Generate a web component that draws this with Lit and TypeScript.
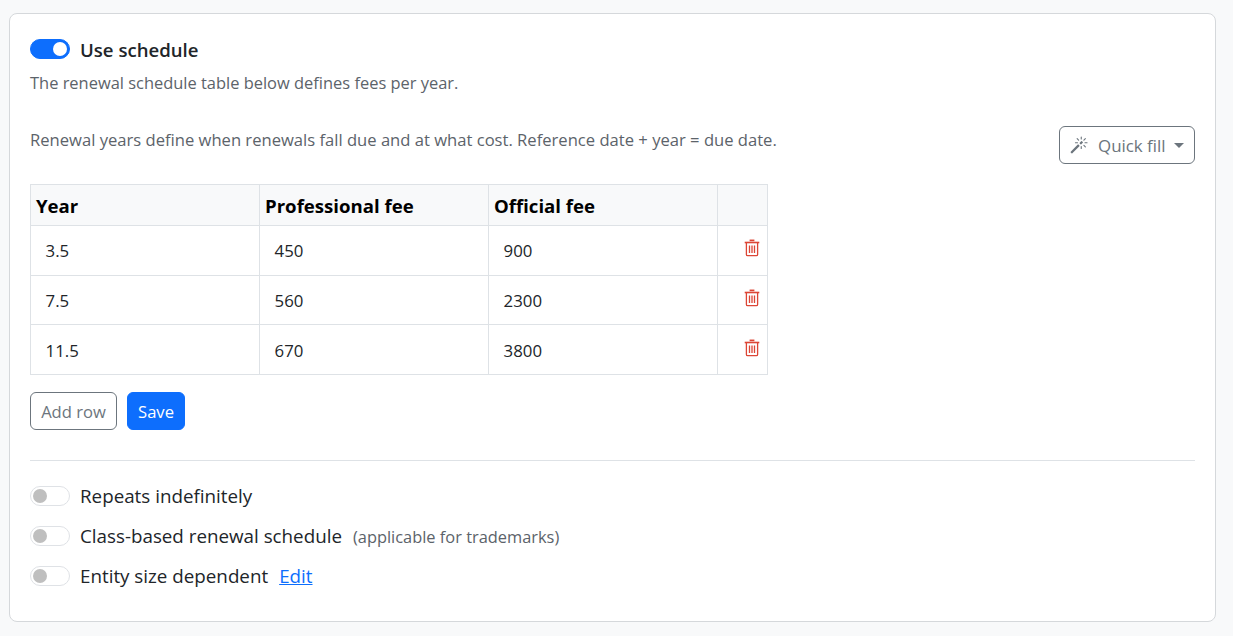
import { LitElement, html, css } from "lit";
import { customElement } from "lit/decorators.js";

@customElement("app-root")
export class AppRoot extends LitElement {
  static styles = css`
    :host { display: block; height: 636px; box-sizing: border-box; background: #f8f9fa; padding: 13px 17px 14px 9px;
      font-family: "Open Sans", "Noto Sans", sans-serif; font-size: 16.6px; color: #212529; overflow: hidden; }
    * { box-sizing: border-box; }
    .card { background: #fff; border: 1px solid #d5d8db; border-radius: 8px; height: 609px; padding: 23px 20px 0; }
    .sw-row { display: flex; align-items: center; gap: 10px; height: 24px; }
    .sw { width: 40px; height: 20px; border-radius: 10px; border: 1px solid #dfe2e6; background: #fff; display: flex; align-items: center; padding: 0 2px; flex: none; }
    .sw i { width: 14px; height: 14px; border-radius: 50%; background: #bfbfbf; display: block; }
    .sw.on { background: #0d6efd; border-color: #0d6efd; justify-content: flex-end; }
    .sw.on i { background: #fff; }
    .label { font-size: 18.8px; }
    .strong { font-weight: 600; font-size: 18.6px; }
    .muted { color: #5c636a; }
    .desc { margin: 10px 0 0; line-height: 24px; font-size: 16.45px; }
    .head { display: flex; justify-content: space-between; align-items: flex-start; margin-top: 31px; }
    .head p { margin: 2px 0 0; line-height: 24px; }
    .btn { height: 38px; border-radius: 6px; border: 1px solid #6c757d; color: #6c757d; background: #fff; display: inline-flex; align-items: center; padding: 0 10px; font: inherit; white-space: nowrap; }
    .qf { width: 136px; padding: 0 0 0 10px; font-size: 16.9px; }
    .qf svg { margin-right: 10px; flex: none; }
    .caret { width: 0; height: 0; flex: none; border-left: 5px solid transparent; border-right: 5px solid transparent; border-top: 5px solid #6c757d; margin-left: 8px; }
    table { border-collapse: collapse; margin-top: 20px; table-layout: fixed; width: 738px; }
    th, td { border: 1px solid #dee2e6; padding: 0; }
    th { background: #f8f9fa; height: 41px; text-align: left; padding: 0 5px; color: #000; font-size: 18.6px; font-weight: 700; }
    td { height: 49.7px; padding: 0.6px 15px 0 14.6px; color: #212529; font-size: 16.8px; }
    td.act { padding: 0 0 4px 26px; vertical-align: middle; }
    td.act svg { display: block; }
    .actions { display: flex; gap: 10px; margin-top: 17px; }
    .add { width: 87px; justify-content: center; padding: 0; }
    .save { background: #0d6efd; border-color: #0d6efd; color: #fff; width: 58px; justify-content: center; padding: 0; }
    hr { border: 0; border-top: 1px solid #dee2e6; margin: 30px 0 0; }
    .opts { display: flex; flex-direction: column; gap: 16px; margin-top: 23.4px; }
    .small { font-size: 16.4px; margin-left: 1px; }
    a { color: #0d6efd; text-decoration: underline; font-size: 18.8px; margin-left: 1px; }
  `;

  trash() {
    return html`<svg width="16" height="18" viewBox="0 0 16 18" fill="none" stroke="#dc4535" stroke-width="1.3">
      <path d="M0.7 3.5h14.6" stroke-width="1.6"/><path d="M5.6 1.4h4.8" stroke-width="1.7"/>
      <path d="M2.4 4v11.4a1.3 1.3 0 0 0 1.3 1.3h8.6a1.3 1.3 0 0 0 1.3-1.3V4"/>
      <path d="M5.5 6.5v7.5M8 6.5v7.5M10.5 6.5v7.5"/></svg>`;
  }

  render() {
    const rows = [["3.5", "450", "900"], ["7.5", "560", "2300"], ["11.5", "670", "3800"]];
    return html`<div class="card">
      <div class="sw-row"><span class="sw on"><i></i></span><span class="strong">Use schedule</span></div>
      <p class="desc muted">The renewal schedule table below defines fees per year.</p>
      <div class="head">
        <p class="muted">Renewal years define when renewals fall due and at what cost. Reference date + year = due date.</p>
        <button class="btn qf">
          <svg width="18" height="18" viewBox="0 0 16 16" fill="#6c757d"><path d="M9.5 2.672a.5.5 0 1 0 1 0V.843a.5.5 0 0 0-1 0v1.829Zm4.5.035A.5.5 0 0 0 13.293 2L12 3.293a.5.5 0 1 0 .707.707L14 2.707ZM7.293 4A.5.5 0 1 0 8 3.293L6.707 2A.5.5 0 0 0 6 2.707L7.293 4Zm-.621 2.5a.5.5 0 1 0 0-1H4.843a.5.5 0 1 0 0 1h1.829Zm8.485 0a.5.5 0 1 0 0-1h-1.829a.5.5 0 0 0 0 1h1.829ZM13.293 10A.5.5 0 1 0 14 9.293L12.707 8a.5.5 0 1 0-.707.707L13.293 10ZM9.5 11.157a.5.5 0 0 0 1 0V9.328a.5.5 0 0 0-1 0v1.829Zm1.854-5.097a.5.5 0 0 0 0-.706l-.708-.708a.5.5 0 0 0-.707 0L8.646 5.94a.5.5 0 0 0 0 .707l.708.708a.5.5 0 0 0 .707 0l1.293-1.293Zm-3 3a.5.5 0 0 0 0-.706l-.708-.708a.5.5 0 0 0-.707 0L.646 13.94a.5.5 0 0 0 0 .707l.708.708a.5.5 0 0 0 .707 0L8.354 9.06Z"/></svg>
          <span>Quick fill</span><span class="caret"></span>
        </button>
      </div>
      <table>
        <colgroup><col style="width:229px"><col style="width:229px"><col style="width:229px"><col style="width:50px"></colgroup>
        <thead><tr><th>Year</th><th>Professional fee</th><th>Official fee</th><th></th></tr></thead>
        <tbody>${rows.map(r => html`<tr>${r.map(c => html`<td>${c}</td>`)}<td class="act">${this.trash()}</td></tr>`)}</tbody>
      </table>
      <div class="actions"><button class="btn add">Add row</button><button class="btn save">Save</button></div>
      <hr />
      <div class="opts">
        <div class="sw-row"><span class="sw"><i></i></span><span class="label">Repeats indefinitely</span></div>
        <div class="sw-row"><span class="sw"><i></i></span><span class="label">Class-based renewal schedule</span><span class="muted small">(applicable for trademarks)</span></div>
        <div class="sw-row"><span class="sw"><i></i></span><span class="label">Entity size dependent</span><a href="#">Edit</a></div>
      </div>
    </div>`;
  }
}
